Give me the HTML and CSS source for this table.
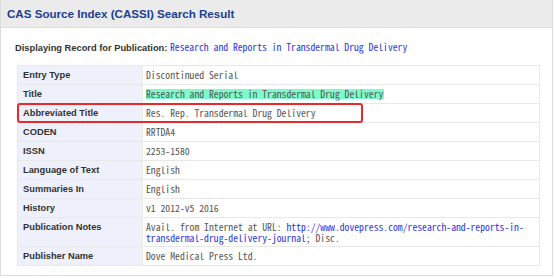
FILE: index.html
```html
<!DOCTYPE html>
<html>
<head>
<meta charset="utf-8">
<link rel="stylesheet" href="styles.css">
</head>
<body>
<div class="panel">
  <div class="panel-head">CAS Source Index (CASSI) Search Result</div>
  <div class="panel-body">
    <p class="record">Displaying Record for Publication: <a class="mono link">Research and Reports in Transdermal Drug Delivery</a></p>
    <div class="table-wrap">
      <table class="info">
        <tr><th>Entry Type</th><td>Discontinued Serial</td></tr>
        <tr><th>Title</th><td><span class="hl">Research and Reports in Transdermal Drug Delivery</span></td></tr>
        <tr><th>Abbreviated Title</th><td>Res. Rep. Transdermal Drug Delivery</td></tr>
        <tr><th>CODEN</th><td>RRTDA4</td></tr>
        <tr><th>ISSN</th><td>2253-1580</td></tr>
        <tr><th>Language of Text</th><td>English</td></tr>
        <tr><th>Summaries In</th><td>English</td></tr>
        <tr><th>History</th><td>v1 2012-v5 2016</td></tr>
        <tr class="tall"><th>Publication Notes</th><td>Avail. from Internet at URL: <a class="link">http://www.dovepress.com/research-and-reports-in-<br>transdermal-drug-delivery-journal</a>; Disc.</td></tr>
        <tr><th>Publisher Name</th><td>Dove Medical Press Ltd.</td></tr>
      </table>
      <div class="mark"></div>
    </div>
  </div>
</div>
</body>
</html>
```
FILE: styles.css
```css
html, body {
  margin: 0;
  padding: 0;
  background: #ffffff;
}
.panel {
  width: 553px;
  height: 276px;
  box-sizing: border-box;
  border: 1px solid #dcdcdc;
  border-top: none;
  font-family: "Liberation Sans", Arial, sans-serif;
}
.panel-head {
  height: 28px;
  box-sizing: border-box;
  background: #ebebeb;
  border-bottom: 1px solid #dedede;
  padding-left: 6px;
  line-height: 27px;
  font-size: 11.6px;
  font-weight: bold;
  color: #1c3f94;
}
.panel-body {
  padding: 14px 0 0 16px;
}
.record {
  margin: 0 0 12px -2px;
  font-size: 9.3px;
  font-weight: bold;
  color: #333333;
  line-height: 11px;
  height: 11px;
}
.mono, .info td {
  font-family: "Noto Sans Mono CJK SC", "Liberation Mono", monospace;
  font-weight: normal;
  font-size: 9.7px;
}
.link {
  color: #2b35e0;
  text-decoration: none;
}
.table-wrap {
  position: relative;
  width: 523px;
}
.info {
  width: 523px;
  border-collapse: collapse;
  border: 1px solid #e4e4e4;
}
.info th, .info td {
  border: 1px solid #e8e8e8;
  height: 19px;
  box-sizing: border-box;
  padding: 4px 4px 0 4px;
  vertical-align: top;
  line-height: 11px;
  text-align: left;
}
.info th {
  width: 125px;
  background: #eef0fb;
  color: #333333;
  font-size: 9.3px;
  font-weight: bold;
  padding-left: 5px;
}
.info td {
  color: #555555;
  padding-left: 3px;
}
.info tr.tall th, .info tr.tall td {
  height: 29px;
  line-height: 10.5px;
}
.hl {
  display: inline-block;
  background: #7dfccb;
  line-height: 10px;
  padding-right: 1px;
}
.mark {
  position: absolute;
  left: 0;
  top: 38px;
  width: 346px;
  height: 20px;
  box-sizing: border-box;
  border: 2px solid #e82a2a;
  border-radius: 3px;
}
```
